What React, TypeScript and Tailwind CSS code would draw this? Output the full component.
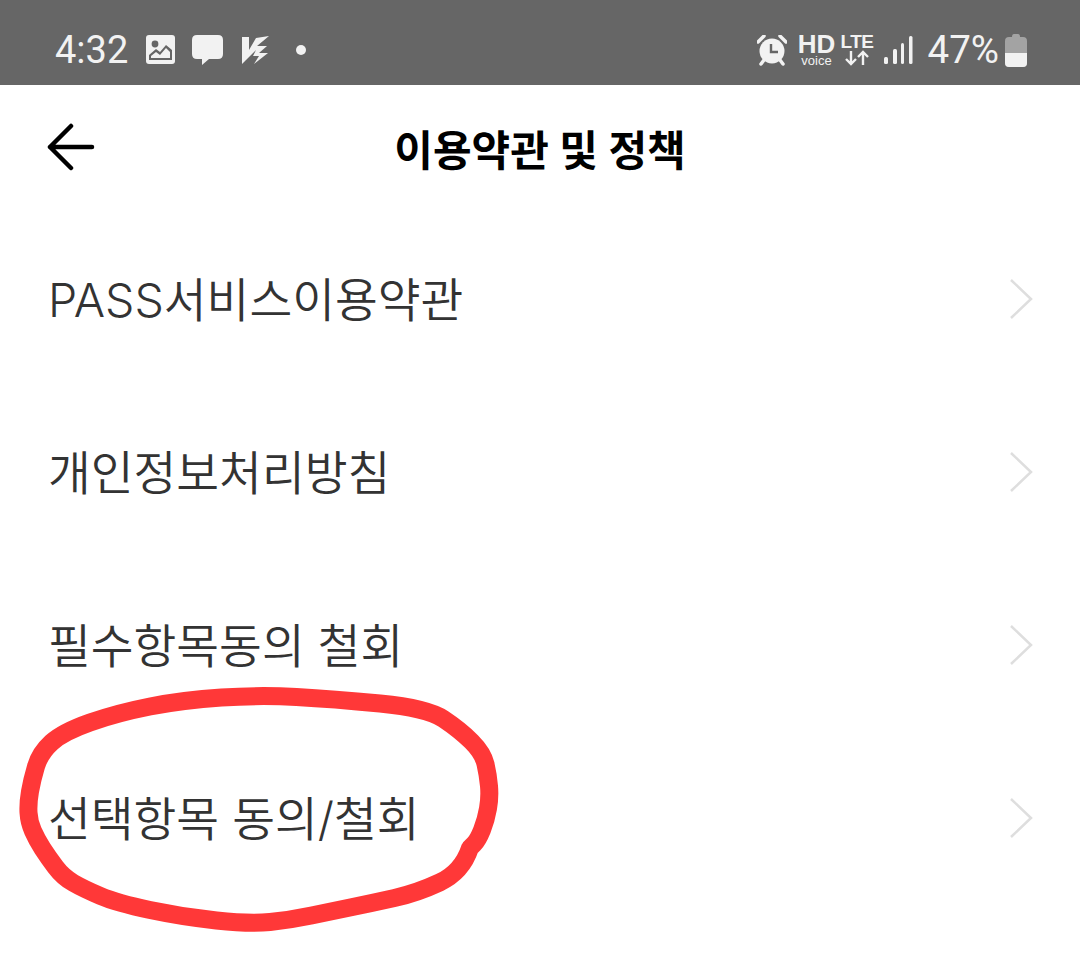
const FONT = "font-['Roboto','Noto_Sans_CJK_KR','Noto_Sans',sans-serif]";

const ROWS = ["PASS서비스이용약관", "개인정보처리방침", "필수항목동의 철회", "선택항목 동의/철회"];

// hand drawn circle, centre line of the marker stroke
const MARKER: [number, number][] = [
  [470, 848], [462, 872], [417, 893], [372, 903], [333, 911], [290, 920], [250, 924], [183, 917], [117, 903], [84, 889], [63, 877],
  [48, 857], [37, 840], [29, 822], [28, 803], [32, 780], [40, 753], [63, 732], [117, 713], [183, 700],
  [260, 695], [333, 699], [427, 708], [460, 730], [483, 753], [488, 775], [490, 797], [486, 820], [478, 840], [470, 848],
];

const smooth = (pts: [number, number][]) => {
  let d = `M${pts[0][0]} ${pts[0][1]}`;
  for (let i = 1; i < pts.length - 1; i++) {
    const mx = (pts[i][0] + pts[i + 1][0]) / 2;
    const my = (pts[i][1] + pts[i + 1][1]) / 2;
    d += ` Q${pts[i][0]} ${pts[i][1]} ${mx} ${my}`;
  }
  const last = pts[pts.length - 1];
  return `${d} L${last[0]} ${last[1]}`;
};

const StatusLeft = () => (
  <div className="flex items-center">
    <span className="text-[38px] leading-none text-[#f2f2f2] font-['Roboto',sans-serif]">4:32</span>
    <svg className="ml-[18px] w-[30px] h-[30px]" viewBox="0 0 30 30">
      <rect x="0" y="0" width="29" height="29" rx="3" fill="#f2f2f2" />
      <circle cx="9" cy="9" r="3.4" fill="#666" />
      <path d="M3 25 V20 L10 14 L14 17 L20 10 L26 15 V25 Z" fill="#666" />
      <path d="M5 23 V21 L10 17 L14 20 L20 13 L24 17 V23 Z" fill="#f2f2f2" />
    </svg>
    <svg className="ml-[16px] w-[31px] h-[31px]" viewBox="0 0 31 31">
      <path d="M5 0 H26 Q31 0 31 5 V19 Q31 24 26 24 H17 L10 30 V24 H5 Q0 24 0 19 V5 Q0 0 5 0 Z" fill="#f2f2f2" />
    </svg>
    <svg className="ml-[19px] w-[29px] h-[29px]" viewBox="0 0 29 29">
      <path d="M0 1 H7 V14 L14 2 L27 0 L15 10 L25 10 L17 17 L26 17 L12 28 L17 20 L11 20 L14 14 L0 28 Z" fill="#f2f2f2" />
    </svg>
    <span className="ml-[25px] w-[10px] h-[10px] rounded-full bg-[#f2f2f2]" />
  </div>
);

const StatusRight = () => (
  <div className="flex items-center">
    <svg className="w-[30px] h-[31px]" viewBox="0 0 30 31">
      <path d="M1 7 L7 1 M29 7 L23 1" stroke="#f2f2f2" strokeWidth="3.5" strokeLinecap="round" />
      <path d="M7 25 L4 29 M23 25 L26 29" stroke="#f2f2f2" strokeWidth="3.5" strokeLinecap="round" />
      <circle cx="15" cy="16" r="12.5" fill="#f2f2f2" />
      <path d="M14 9 V17 H21" stroke="#666" strokeWidth="2.4" fill="none" />
    </svg>
    <div className="ml-[13px] flex flex-col items-center w-[34px] text-[#f2f2f2] font-['Liberation_Sans',sans-serif]">
      <span className="text-[26px] leading-[21px] font-bold">HD</span>
      <span className="text-[13px] leading-[12px]">voice</span>
    </div>
    <div className="ml-[8px] flex flex-col items-center w-[31px] text-[#f2f2f2] font-['Liberation_Sans',sans-serif]">
      <span className="text-[19px] leading-[16px] font-bold tracking-[-0.5px]">LTE</span>
      <svg className="w-[24px] h-[16px]" viewBox="0 0 24 16">
        <path d="M6 1 V14 M1 9 L6 14 L11 9 M18 15 V2 M13 7 L18 2 L23 7" stroke="#f2f2f2" strokeWidth="2.4" fill="none" />
      </svg>
    </div>
    <svg className="ml-[11px] w-[29px] h-[30px]" viewBox="0 0 29 30">
      <g fill="#f2f2f2">
        <rect x="0" y="22" width="4" height="7" rx="1.5" />
        <rect x="9" y="14" width="4" height="15" rx="1.5" />
        <rect x="17" y="8" width="3" height="21" rx="1.5" />
        <rect x="25" y="1" width="3.5" height="28" rx="1.5" />
      </g>
    </svg>
    <span className="ml-[15px] text-[38.5px] leading-none text-[#f2f2f2] font-['Roboto',sans-serif]">47%</span>
    <svg className="ml-[6px] w-[22px] h-[33px]" viewBox="0 0 22 33">
      <path d="M7 3 Q7 0 9 0 H13 Q15 0 15 3 H18 Q22 3 22 7 V29 Q22 33 18 33 H4 Q0 33 0 29 V7 Q0 3 4 3 Z" fill="#a3a3a3" />
      <path d="M0 19 H22 V29 Q22 33 18 33 H4 Q0 33 0 29 Z" fill="#f2f2f2" />
    </svg>
  </div>
);

export default function App() {
  return (
    <div className={`relative w-[1080px] h-[977px] bg-white overflow-hidden ${FONT}`}>
      <div className="h-[85px] bg-[#666666] flex items-center justify-between pl-[55px] pr-[53px] pt-[15px]">
        <StatusLeft />
        <StatusRight />
      </div>

      <header className="relative h-[127px] flex items-center justify-center pt-[6px]">
        <svg className="absolute left-[46px] top-[38px] w-[50px] h-[48px]" viewBox="0 0 50 48">
          <path d="M4 24 H46 M25 3 L4 24 L25 45" stroke="#000" strokeWidth="4.5" strokeLinecap="round" strokeLinejoin="round" fill="none" />
        </svg>
        <h1 className="text-[42px] leading-none font-bold text-black">이용약관 및 정책</h1>
      </header>

      <ul>
        {ROWS.map((label) => (
          <li key={label} className="h-[173px] flex items-center justify-between pl-[48px] pr-[47px]">
            <span className="pt-[3px] text-[46.5px] leading-none font-[350] text-[#333333] font-['Inter','Noto_Sans_CJK_KR',sans-serif]">{label}</span>
            <svg className="w-[24px] h-[42px]" viewBox="0 0 24 42">
              <path d="M2 2 L22 21 L2 40" stroke="#dedede" strokeWidth="2.5" fill="none" />
            </svg>
          </li>
        ))}
      </ul>

      <svg className="absolute inset-0 w-[1080px] h-[977px] pointer-events-none" viewBox="0 0 1080 977">
        <path d={smooth(MARKER)} stroke="#ff3838" strokeWidth="18" strokeLinecap="round" strokeLinejoin="round" fill="none" />
      </svg>
    </div>
  );
}
